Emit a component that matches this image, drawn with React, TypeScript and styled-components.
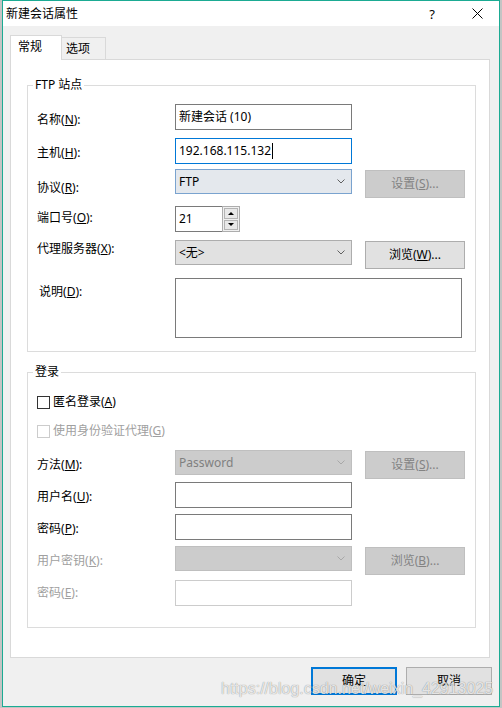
import React from 'react';
import styled, { createGlobalStyle } from 'styled-components';

const UI_FONT = `"Noto Sans", "Noto Sans CJK SC", sans-serif`;

const GlobalStyle = createGlobalStyle`
    html, body {
        margin: 0;
        padding: 0;
    }
    body {
        background: #c4c4c4;
        font-family: ${UI_FONT};
        font-size: 12px;
        color: #000;
    }
    * {
        box-sizing: border-box;
    }
`

const Desktop = styled.div`
    position: relative;
    width: 502px;
    height: 708px;
    padding-left: 2px;
    background: #c4c4c4;
    overflow: hidden;
`

const Dialog = styled.div`
    width: 498px;
    height: 707px;
    border: 1px solid #1bab93;
    background: #f0f0f0;
    display: flex;
    flex-direction: column;
`

const TitleBar = styled.div`
    height: 25px;
    background: #fff;
    display: flex;
    align-items: center;
    padding-left: 3px;
`

const TitleText = styled.div`
    flex: 1;
    line-height: 16px;
`

const TitleButton = styled.div<{ $w: number }>`
    width: ${p => p.$w}px;
    height: 25px;
    display: flex;
    align-items: center;
    justify-content: center;
    font-size: 13px;
`

const Body = styled.div`
    flex: 1;
    display: flex;
    flex-direction: column;
    padding: 9px 0 11px 7px;
`

const TabStrip = styled.div`
    display: flex;
    align-items: flex-end;
    height: 24px;
`

const Tab = styled.div<{ $active?: boolean }>`
    position: relative;
    z-index: ${p => p.$active ? 1 : 0};
    width: ${p => p.$active ? 52 : 45}px;
    height: ${p => p.$active ? 25 : 22}px;
    margin-bottom: ${p => p.$active ? -1 : 0}px;
    margin-left: ${p => p.$active ? 0 : -1}px;
    padding: 3px 0 0 ${p => p.$active ? 7 : 4}px;
    line-height: 16px;
    background: ${p => p.$active ? '#fff' : '#f0f0f0'};
    border: 1px solid #d9d9d9;
    border-bottom: none;
`

const Panel = styled.div`
    width: 480px;
    height: 599px;
    border: 1px solid #d9d9d9;
    background: #fff;
    padding: 0 13px 0 16px;
    display: flex;
    flex-direction: column;
`

const GroupBox = styled.div<{ $mt: number; $pt: number; $pb: number }>`
    position: relative;
    margin-top: ${p => p.$mt}px;
    padding: ${p => p.$pt}px 0 ${p => p.$pb}px 9px;
    border: 1px solid #dcdcdc;
    display: flex;
    flex-direction: column;
`

const Caption = styled.span`
    position: absolute;
    top: -9px;
    left: 5px;
    padding: 0 2px;
    line-height: 16px;
    background: #fff;
`

const FieldRow = styled.div<{ $mt?: number; $h: number }>`
    display: grid;
    grid-template-columns: 138px 177px 13px 100px;
    align-items: start;
    margin-top: ${p => p.$mt ?? 0}px;
    height: ${p => p.$h}px;
`

const FieldLabel = styled.div<{ $offset: number; $indent?: number; $disabled?: boolean }>`
    padding-top: ${p => p.$offset}px;
    padding-left: ${p => p.$indent ?? 0}px;
    line-height: 16px;
    white-space: nowrap;
    color: ${p => p.$disabled ? '#a0a0a0' : '#000'};
`

const TextBox = styled.div<{ $w?: number; $h?: number; $state?: 'focus' | 'disabled' }>`
    width: ${p => p.$w ?? 177}px;
    height: ${p => p.$h ?? 26}px;
    border: 1px solid ${p => p.$state === 'focus' ? '#0078d7' : p.$state === 'disabled' ? '#cccccc' : '#7a7a7a'};
    background: #fff;
    padding: 0 3px;
    display: flex;
    align-items: center;
    line-height: 16px;
    white-space: nowrap;
`

const Caret = styled.span`
    display: inline-block;
    width: 1px;
    height: 16px;
    margin-left: 1px;
    background: #000;
`

const ComboBox = styled.div<{ $tone: 'hover' | 'normal' | 'disabled' }>`
    width: 177px;
    height: 25px;
    padding-left: 3px;
    display: flex;
    align-items: center;
    justify-content: space-between;
    line-height: 16px;
    color: ${p => p.$tone === 'disabled' ? '#808080' : '#000'};
    background: ${p => p.$tone === 'hover' ? '#e4e8ed' : p.$tone === 'disabled' ? '#cccccc' : '#e1e1e1'};
    border: 1px solid ${p => p.$tone === 'hover' ? '#7aa3cf' : p.$tone === 'disabled' ? '#bfbfbf' : '#adadad'};

    svg {
        margin-right: 6px;
    }
`

const PushButton = styled.div<{ $w?: number; $disabled?: boolean; $default?: boolean }>`
    width: ${p => p.$w ?? 100}px;
    height: 28px;
    margin-top: ${p => p.$default === undefined && p.$w === undefined ? 1 : 0}px;
    display: flex;
    align-items: center;
    justify-content: center;
    line-height: 16px;
    white-space: nowrap;
    color: ${p => p.$disabled ? '#838383' : '#000'};
    background: ${p => p.$disabled ? '#cccccc' : '#e1e1e1'};
    border: ${p => p.$default ? '2px solid #0078d7' : `1px solid ${p.$disabled ? '#bfbfbf' : '#adadad'}`};
`

const Spinner = styled.div`
    display: flex;
`

const SpinColumn = styled.div`
    width: 18px;
    height: 26px;
    margin-left: -1px;
    padding: 1px;
    border: 1px solid #adadad;
    background: #f0f0f0;
    display: flex;
    flex-direction: column;
    gap: 1px;
`

const SpinButton = styled.div<{ $down?: boolean }>`
    flex: 1;
    border: 1px solid #b4b4b4;
    background: #e8e8e8;
    display: flex;
    align-items: center;
    justify-content: center;

    &::after {
        content: '';
        border-left: 3px solid transparent;
        border-right: 3px solid transparent;
        ${p => p.$down ? 'border-top: 3px solid #000;' : 'border-bottom: 3px solid #000;'}
    }
`

const CheckRow = styled.div<{ $mt?: number; $disabled?: boolean }>`
    display: flex;
    align-items: center;
    height: 16px;
    margin-top: ${p => p.$mt ?? 0}px;
    line-height: 16px;
    color: ${p => p.$disabled ? '#a0a0a0' : '#000'};
`

const CheckBox = styled.span<{ $disabled?: boolean }>`
    width: 13px;
    height: 13px;
    margin-right: 3px;
    background: #fff;
    border: 1px solid ${p => p.$disabled ? '#cccccc' : '#333333'};
`

const Footer = styled.div`
    display: flex;
    justify-content: flex-end;
    gap: 9px;
    margin-top: 9px;
    padding-right: 7px;
`

const Watermark = styled.div`
    position: absolute;
    left: 221px;
    top: 680px;
    font-family: "Liberation Sans", Arial, sans-serif;
    font-size: 16px;
    line-height: 18px;
    color: rgba(255, 255, 255, 0.8);
    text-shadow: 0 0 1px rgba(0, 0, 0, 0.35), 0 0 1px rgba(0, 0, 0, 0.2);
    pointer-events: none;
`

const Chevron = ({ color }: { color: string }) => (
    <svg width="8" height="5" viewBox="0 0 8 5">
        <polyline points="0.5,0.5 4,4 7.5,0.5" fill="none" stroke={color} strokeWidth="1" />
    </svg>
)

const CloseIcon = () => (
    <svg width="11" height="11" viewBox="0 0 11 11">
        <path d="M0.5 0.5 L10.5 10.5 M10.5 0.5 L0.5 10.5" stroke="#000" strokeWidth="1" />
    </svg>
)

// label text with the access key underlined
const Key = ({ text, k, tail = '):' }: { text: string; k: string; tail?: string }) => (
    <>{text}(<u>{k}</u>{tail}</>
)

export default function App() {
    return (
        <Desktop>
            <GlobalStyle />
            <Dialog>
                <TitleBar>
                    <TitleText>新建会话属性</TitleText>
                    <TitleButton $w={46}>?</TitleButton>
                    <TitleButton $w={44}><CloseIcon /></TitleButton>
                </TitleBar>
                <Body>
                    <TabStrip>
                        <Tab $active>常规</Tab>
                        <Tab>选项</Tab>
                    </TabStrip>
                    <Panel>
                        <GroupBox $mt={25} $pt={18} $pb={13}>
                            <Caption>FTP 站点</Caption>
                            <FieldRow $h={26}>
                                <FieldLabel $offset={8}><Key text="名称" k="N" /></FieldLabel>
                                <TextBox>新建会话 (10)</TextBox>
                            </FieldRow>
                            <FieldRow $mt={8} $h={26}>
                                <FieldLabel $offset={7}><Key text="主机" k="H" /></FieldLabel>
                                <TextBox $state="focus">192.168.115.132<Caret /></TextBox>
                            </FieldRow>
                            <FieldRow $mt={5} $h={29}>
                                <FieldLabel $offset={11}><Key text="协议" k="R" /></FieldLabel>
                                <ComboBox $tone="hover">FTP<Chevron color="#606060" /></ComboBox>
                                <span />
                                <PushButton $disabled><Key text="设置" k="S" tail=")..." /></PushButton>
                            </FieldRow>
                            <FieldRow $mt={8} $h={26}>
                                <FieldLabel $offset={4}><Key text="端口号" k="O" /></FieldLabel>
                                <Spinner>
                                    <TextBox $w={48}>21</TextBox>
                                    <SpinColumn>
                                        <SpinButton />
                                        <SpinButton $down />
                                    </SpinColumn>
                                </Spinner>
                            </FieldRow>
                            <FieldRow $mt={8} $h={29}>
                                <FieldLabel $offset={1}><Key text="代理服务器" k="X" /></FieldLabel>
                                <ComboBox $tone="normal">&lt;无&gt;<Chevron color="#606060" /></ComboBox>
                                <span />
                                <PushButton><Key text="浏览" k="W" tail=")..." /></PushButton>
                            </FieldRow>
                            <FieldRow $mt={9} $h={60}>
                                <FieldLabel $offset={6} $indent={2}><Key text="说明" k="D" /></FieldLabel>
                                <TextBox $w={287} $h={60} />
                            </FieldRow>
                        </GroupBox>

                        <GroupBox $mt={20} $pt={21} $pb={21}>
                            <Caption>登录</Caption>
                            <CheckRow>
                                <CheckBox />
                                匿名登录(<u>A</u>)
                            </CheckRow>
                            <CheckRow $mt={13} $disabled>
                                <CheckBox $disabled />
                                使用身份验证代理(<u>G</u>)
                            </CheckRow>
                            <FieldRow $mt={11} $h={29}>
                                <FieldLabel $offset={7}><Key text="方法" k="M" /></FieldLabel>
                                <ComboBox $tone="disabled">Password<Chevron color="#a8a8a8" /></ComboBox>
                                <span />
                                <PushButton $disabled><Key text="设置" k="S" tail=")..." /></PushButton>
                            </FieldRow>
                            <FieldRow $mt={3} $h={26}>
                                <FieldLabel $offset={7}><Key text="用户名" k="U" /></FieldLabel>
                                <TextBox />
                            </FieldRow>
                            <FieldRow $mt={6} $h={26}>
                                <FieldLabel $offset={7}><Key text="密码" k="P" /></FieldLabel>
                                <TextBox />
                            </FieldRow>
                            <FieldRow $mt={6} $h={29}>
                                <FieldLabel $offset={7} $disabled><Key text="用户密钥" k="K" /></FieldLabel>
                                <ComboBox $tone="disabled"><span /><Chevron color="#a8a8a8" /></ComboBox>
                                <span />
                                <PushButton $disabled><Key text="浏览" k="B" tail=")..." /></PushButton>
                            </FieldRow>
                            <FieldRow $mt={5} $h={26}>
                                <FieldLabel $offset={5} $disabled><Key text="密码" k="E" /></FieldLabel>
                                <TextBox $state="disabled" />
                            </FieldRow>
                        </GroupBox>
                    </Panel>
                    <Footer>
                        <PushButton $w={86} $default>确定</PushButton>
                        <PushButton $w={86}>取消</PushButton>
                    </Footer>
                </Body>
            </Dialog>
            <Watermark>https://blog.csdn.net/weixin_42913025</Watermark>
        </Desktop>
    )
}
